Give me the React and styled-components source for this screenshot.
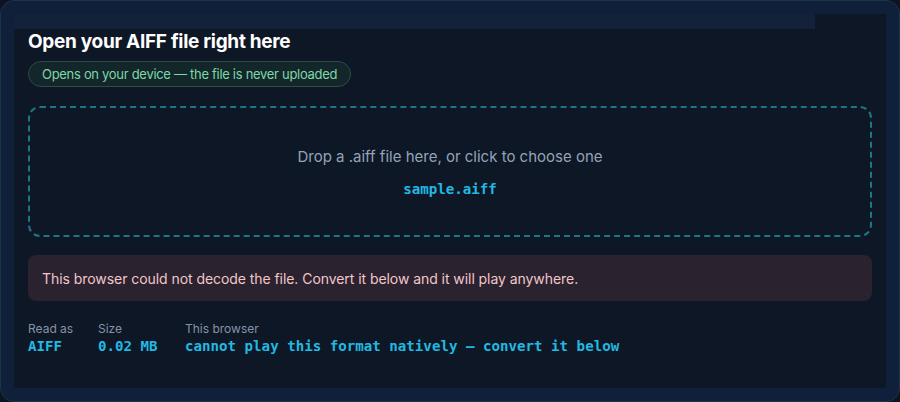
import React from 'react'
import styled, { createGlobalStyle } from 'styled-components'

const Global = createGlobalStyle`
  html, body { margin: 0; padding: 0; background: #0c1422; }
  body { width: 900px; height: 402px; overflow: hidden; font-family: Inter, "Noto Sans", sans-serif; }
`

const Frame = styled.div`
  box-sizing: border-box;
  width: 900px;
  height: 402px;
  border: 1px solid #1c3448;
  border-radius: 14px;
  background: #11203a;
  padding: 13px;
  display: flex;
  overflow: hidden;
`

const Panel = styled.div`
  flex: 1;
  background: #0e1726;
  display: flex;
  flex-direction: column;
  padding: 0 14px;
`

const HeadBand = styled.div`
  height: 15px;
  margin: 0 57px 0 -14px;
  background: #13223a;
`

const Title = styled.h1`
  margin: 2px 0 0;
  font-size: 19px;
  line-height: 22px;
  font-weight: 700;
  color: #ffffff;
  letter-spacing: -0.3px;
`

const Badge = styled.div`
  align-self: flex-start;
  margin-top: 8px;
  box-sizing: border-box;
  height: 26px;
  padding: 0 13px;
  display: flex;
  align-items: center;
  border: 1px solid #2e4b4a;
  border-radius: 13px;
  background: #13272a;
  color: #7fd6a9;
  font-size: 13px;
  letter-spacing: -0.3px;
`

const Drop = styled.div`
  margin-top: 19px;
  height: 131px;
  box-sizing: border-box;
  border: 2px dashed #1e7588;
  border-radius: 12px;
  display: flex;
  flex-direction: column;
  align-items: center;
  justify-content: center;
  gap: 14px;
  cursor: pointer;
`

const DropText = styled.div`
  color: #94a3b8;
  font-size: 15px;
  line-height: 20px;
`

const Mono = styled.span`
  font-family: "DejaVu Sans Mono", "Liberation Mono", monospace;
  font-weight: 700;
  font-size: 14.15px;
  color: #22b9e0;
`

const Alert = styled.div`
  margin-top: 18px;
  height: 46px;
  box-sizing: border-box;
  padding: 0 14px;
  display: flex;
  align-items: center;
  border-radius: 8px;
  background: #2a222e;
  color: #f2c7cb;
  font-size: 14px;
  letter-spacing: -0.06px;
`

const Stats = styled.div`
  margin-top: 20px;
  display: flex;
`

const Stat = styled.div`
  width: ${p => p.$w || 'auto'};
  display: flex;
  flex-direction: column;
  gap: 2px;
`

const Label = styled.div`
  font-size: 12px;
  line-height: 15px;
  color: #8593a6;
`

export default function App() {
  return (
    <>
      <Global />
      <Frame>
        <Panel>
          <HeadBand />
          <Title>Open your AIFF file right here</Title>
          <Badge>Opens on your device — the file is never uploaded</Badge>
          <Drop>
            <DropText>Drop a .aiff file here, or click to choose one</DropText>
            <Mono>sample.aiff</Mono>
          </Drop>
          <Alert>This browser could not decode the file. Convert it below and it will play anywhere.</Alert>
          <Stats>
            <Stat $w="70px">
              <Label>Read as</Label>
              <Mono>AIFF</Mono>
            </Stat>
            <Stat $w="87px">
              <Label>Size</Label>
              <Mono>0.02 MB</Mono>
            </Stat>
            <Stat>
              <Label>This browser</Label>
              <Mono>cannot play this format natively — convert it below</Mono>
            </Stat>
          </Stats>
        </Panel>
      </Frame>
    </>
  )
}
